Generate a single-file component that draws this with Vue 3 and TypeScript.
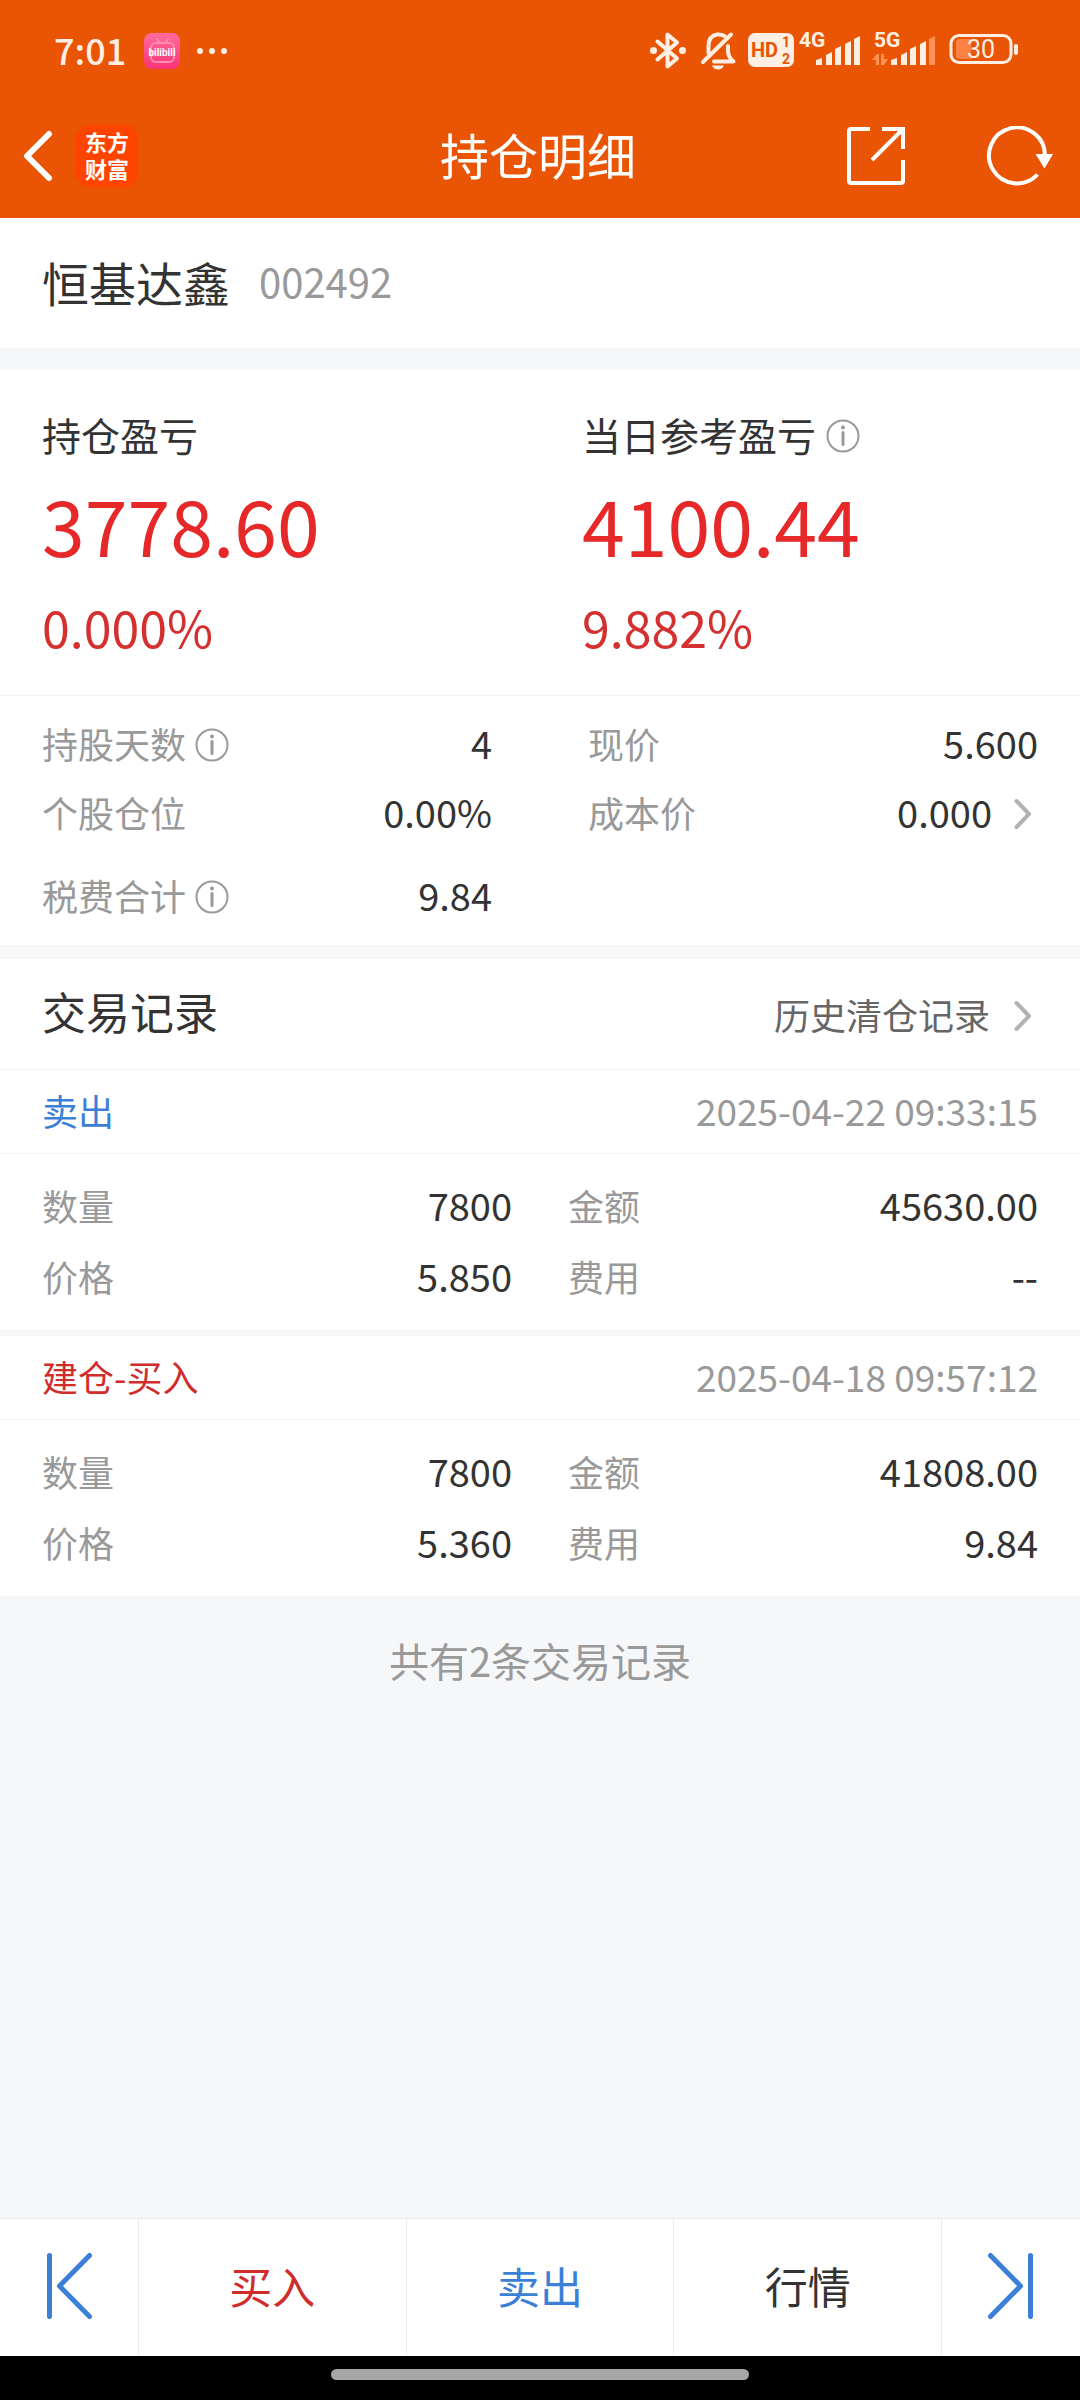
<script setup lang="ts">
import { ref } from 'vue'

interface Metric {
  label: string
  value: string
  info?: boolean
  link?: boolean
  spaced?: boolean
}

interface TradeRecord {
  type: string
  side: 'buy' | 'sell'
  time: string
  left: Metric[]
  right: Metric[]
}

const summary = ref([
  { label: '持仓盈亏', amount: '3778.60', percent: '0.000%', info: false },
  { label: '当日参考盈亏', amount: '4100.44', percent: '9.882%', info: true },
])

const leftMetrics = ref<Metric[]>([
  { label: '持股天数', value: '4', info: true },
  { label: '个股仓位', value: '0.00%' },
  { label: '税费合计', value: '9.84', info: true, spaced: true },
])

const rightMetrics = ref<Metric[]>([
  { label: '现价', value: '5.600' },
  { label: '成本价', value: '0.000', link: true },
])

const records = ref<TradeRecord[]>([
  {
    type: '卖出',
    side: 'sell',
    time: '2025-04-22 09:33:15',
    left: [
      { label: '数量', value: '7800' },
      { label: '价格', value: '5.850' },
    ],
    right: [
      { label: '金额', value: '45630.00' },
      { label: '费用', value: '--' },
    ],
  },
  {
    type: '建仓-买入',
    side: 'buy',
    time: '2025-04-18 09:57:12',
    left: [
      { label: '数量', value: '7800' },
      { label: '价格', value: '5.360' },
    ],
    right: [
      { label: '金额', value: '41808.00' },
      { label: '费用', value: '9.84' },
    ],
  },
])
</script>

<template>
  <div class="page">
    <header class="top">
      <div class="status">
        <div class="status-left">
          <span class="clock">7:01</span>
          <svg width="36" height="36" viewBox="0 0 36 36" aria-hidden="true">
            <defs>
              <linearGradient id="pink" x1="0" y1="0" x2="0" y2="1">
                <stop offset="0" stop-color="#ff6c9b" />
                <stop offset="1" stop-color="#fb3277" />
              </linearGradient>
            </defs>
            <rect width="36" height="36" rx="8" fill="url(#pink)" />
            <g fill="none" stroke="#ff8fb2" stroke-width="2" stroke-linecap="round">
              <rect x="7" y="10" width="23" height="19" rx="5" />
              <path d="M13 6l3 4M24 6l-3 4" />
            </g>
            <text class="glyphs" x="18" y="23" text-anchor="middle" font-size="10" font-weight="700" fill="#fff">bilibili</text>
          </svg>
          <svg width="32" height="8" viewBox="0 0 32 8" fill="#ffeee2" aria-hidden="true">
            <circle cx="4" cy="4" r="3" /><circle cx="16" cy="4" r="3" /><circle cx="28" cy="4" r="3" />
          </svg>
        </div>
        <svg class="glyphs" width="370" height="56" viewBox="0 -8 370 56" aria-hidden="true">
          <g fill="none" stroke="#ffeee2" stroke-width="4" stroke-linejoin="round" stroke-linecap="round">
            <path d="M7.500 10.500L27 27.500L17.500 35.500V3.500L27 11.500L7.500 28.500" />
          </g>
          <circle cx="3.500" cy="19.500" r="3.500" fill="#ffeee2" />
          <circle cx="32.500" cy="19.500" r="3.500" fill="#ffeee2" />
          <g fill="none" stroke="#ffeee2" stroke-width="4" stroke-linejoin="round" stroke-linecap="round">
            <path d="M53 31L81 3.500" />
            <path d="M58.500 22V15Q58.500 5 67 3.500Q71 3 74.500 5" />
            <path d="M64 30.500H83.500Q78 26 78 20V15" />
          </g>
          <path d="M62 34.500H74Q72.500 38.500 68 38.500Q63.500 38.500 62 34.500Z" fill="#ffeee2" />
          <rect x="98" y="2" width="46" height="34" rx="7" fill="#ffeee2" />
          <g font-weight="700" fill="#e95504">
            <text x="101" y="26" font-size="20">HD</text>
            <text x="132" y="16" font-size="14">1</text>
            <text x="132" y="33" font-size="14">2</text>
          </g>
          <g font-weight="700" font-size="21" fill="#ffeee2">
            <text x="149" y="16">4G</text>
            <text x="224" y="16">5G</text>
          </g>
          <g fill="#ffeee2">
            <path d="M166 34V29L172 27V34ZM176 34V24L182 21V34ZM185 34V18L191 15V34ZM195 34V13L201 10V34ZM204 34V8L210 5V34Z" />
            <path d="M241 34V29L247 27V34ZM251 34V24L257 21V34ZM260 34V18L266 15V34ZM270 34V13L276 10V34Z" />
          </g>
          <g fill="#ff9257">
            <path d="M279 34V8L285 5V34Z" />
            <path d="M222 29L227 23H229V34H226V29ZM231 34V23H234V28H238L234 34Z" />
          </g>
          <rect x="301" y="4.500" width="60" height="27" rx="8" fill="none" stroke="#ffeee2" stroke-width="3" />
          <path d="M309 8H321V28H309Q306 28 306 25V11Q306 8 309 8Z" fill="#fc8142" />
          <rect x="364" y="13" width="4" height="11" rx="2" fill="#ffeee2" />
          <text x="331" y="27" text-anchor="middle" font-size="25" fill="#ffeee2">30</text>
        </svg>
      </div>
      <nav class="nav">
        <div class="nav-side">
          <button class="icon-button" aria-label="返回">
            <svg width="32" height="52" viewBox="0 0 32 52" fill="none" stroke="#fff" stroke-width="6" stroke-linecap="round" stroke-linejoin="round">
              <path d="M27 4L5 26L27 48" />
            </svg>
          </button>
          <div class="brand"><span>东方财富</span></div>
        </div>
        <h1 class="title">持仓明细</h1>
        <div class="nav-side nav-actions">
          <button class="icon-button" aria-label="分享">
            <svg width="60" height="60" viewBox="0 0 60 60" fill="none" stroke="#fff" stroke-width="4" stroke-linejoin="round">
              <path d="M24 3H5Q3 3 3 5V55Q3 57 5 57H55Q57 57 57 55V34" />
              <path d="M36 3H57V23M57 3L26 34" stroke-linejoin="miter" />
            </svg>
          </button>
          <button class="icon-button" aria-label="刷新">
            <svg width="68" height="60" viewBox="0 0 68 60" fill="none" stroke="#fff" stroke-width="4">
              <path d="M51.500 48.500A28 28 0 1 1 59 30" />
              <path d="M49.500 28H67L58.500 42.500Z" fill="#fff" stroke="none" />
            </svg>
          </button>
        </div>
      </nav>
    </header>

    <main class="content">
      <section class="stock">
        <h2 class="stock-name">恒基达鑫</h2>
        <span class="stock-code">002492</span>
      </section>

      <section class="panel">
        <div class="summary">
          <div v-for="item in summary" :key="item.label" class="summary-item">
            <div class="summary-label">
              <span>{{ item.label }}</span>
              <button v-if="item.info" class="icon-button" :aria-label="item.label + '说明'">
                <svg width="34" height="34" viewBox="0 0 34 34" fill="none" stroke="#999" stroke-width="2">
                  <circle cx="17" cy="17" r="15.500" />
                  <path d="M17 13.500V25.500" stroke-width="3" stroke-linecap="round" />
                  <circle cx="17" cy="8.500" r="2" fill="#999" stroke="none" />
                </svg>
              </button>
            </div>
            <div class="summary-amount">{{ item.amount }}</div>
            <div class="summary-percent">{{ item.percent }}</div>
          </div>
        </div>
        <div class="metrics">
          <dl v-for="(column, index) in [leftMetrics, rightMetrics]" :key="index" class="metric-column">
            <div v-for="m in column" :key="m.label" class="row" :class="{ spaced: m.spaced }">
              <dt>
                <span>{{ m.label }}</span>
                <button v-if="m.info" class="icon-button" :aria-label="m.label + '说明'">
                  <svg width="34" height="34" viewBox="0 0 34 34" fill="none" stroke="#999" stroke-width="2">
                    <circle cx="17" cy="17" r="15.500" />
                    <path d="M17 13.500V25.500" stroke-width="3" stroke-linecap="round" />
                    <circle cx="17" cy="8.500" r="2" fill="#999" stroke="none" />
                  </svg>
                </button>
              </dt>
              <dd>
                <span>{{ m.value }}</span>
                <svg v-if="m.link" class="chevron" width="18" height="32" viewBox="0 0 18 32" aria-hidden="true">
                  <path d="M2.500 3L15 16L2.500 29" />
                </svg>
              </dd>
            </div>
          </dl>
        </div>
      </section>

      <section class="trades">
        <div class="trades-head">
          <h2>交易记录</h2>
          <a href="#history">
            <span>历史清仓记录</span>
            <svg class="chevron" width="18" height="32" viewBox="0 0 18 32" aria-hidden="true">
              <path d="M2.500 3L15 16L2.500 29" />
            </svg>
          </a>
        </div>
        <article v-for="record in records" :key="record.time" class="record">
          <header class="record-head">
            <h3 :class="record.side">{{ record.type }}</h3>
            <time>{{ record.time }}</time>
          </header>
          <div class="record-body">
            <dl v-for="(column, index) in [record.left, record.right]" :key="index" class="record-column">
              <div v-for="m in column" :key="m.label" class="row">
                <dt><span>{{ m.label }}</span></dt>
                <dd><span>{{ m.value }}</span></dd>
              </div>
            </dl>
          </div>
        </article>
      </section>
      <p class="total">共有2条交易记录</p>
    </main>

    <footer class="bottom">
      <div class="tabs">
        <button class="tab-side" aria-label="上一只">
          <svg width="48" height="68" viewBox="0 0 48 68" fill="none" stroke="#3b7fd6" stroke-width="5" stroke-linecap="round" stroke-linejoin="round">
            <path d="M4.500 3.500V64.500M44.500 3.500L14.500 34L44.500 64.500" />
          </svg>
        </button>
        <button class="tab buy">买入</button>
        <button class="tab sell">卖出</button>
        <button class="tab">行情</button>
        <button class="tab-side" aria-label="下一只">
          <svg width="48" height="68" viewBox="0 0 48 68" fill="none" stroke="#3b7fd6" stroke-width="5" stroke-linecap="round" stroke-linejoin="round">
            <path d="M43.500 3.500V64.500M3.500 3.500L33.500 34L3.500 64.500" />
          </svg>
        </button>
      </div>
      <div class="gesture"><span class="pill"></span></div>
    </footer>
  </div>
</template>

<style>
body {
  margin: 0;
  background: #f6f7f9;
}
</style>

<style scoped>
.page {
  display: flex;
  flex-direction: column;
  min-height: 100vh;
  background: #f6f7f9;
  color: #333;
  font-family: "Noto Sans CJK SC", "Noto Sans", sans-serif;
}

h1, h2, h3, p, dl, dd {
  margin: 0;
  font-weight: 400;
}

button {
  padding: 0;
  border: 0;
  background: none;
  color: inherit;
  font-family: inherit;
}

svg {
  display: block;
}

.glyphs {
  font-family: Roboto, "Liberation Sans", sans-serif;
}

.icon-button {
  display: flex;
}

.top {
  background: #e95504;
  color: #fff;
}

.status {
  display: flex;
  align-items: center;
  justify-content: space-between;
  height: 86px;
  padding: 8px 60px 0 54px;
}

.status-left {
  display: flex;
  align-items: center;
  gap: 16px;
}

.clock {
  padding-bottom: 4px;
  margin-right: 2px;
  color: #ffeee2;
  font-size: 36px;
  font-weight: 500;
  line-height: 36px;
}

.nav {
  display: grid;
  grid-template-columns: 1fr auto 1fr;
  align-items: center;
  height: 124px;
  padding: 0 26px 0 22px;
}

.nav-side {
  display: flex;
  align-items: center;
  gap: 22px;
}

.nav-actions {
  justify-content: flex-end;
  gap: 80px;
}

.brand {
  display: flex;
  align-items: center;
  justify-content: center;
  width: 62px;
  height: 62px;
  border-radius: 14px;
  background: #ff4400;
  font-size: 22px;
  font-weight: 700;
  line-height: 27px;
}

.brand span {
  width: 2em;
  padding-bottom: 2px;
}

.title {
  padding-bottom: 4px;
  font-size: 49px;
  line-height: 60px;
}

.stock {
  display: flex;
  align-items: center;
  gap: 29px;
  height: 126px;
  padding: 0 42px 4px;
  background: #fff;
}

.stock-name {
  font-size: 47px;
}

.stock-code {
  color: #999;
  font-size: 40px;
}

.panel {
  margin-top: 22px;
  background: #fff;
}

.summary {
  display: grid;
  grid-template-columns: 1fr 1fr;
  padding: 44px 0 39px;
  border-bottom: 1px solid #f4f4f6;
}

.summary-item {
  padding: 0 42px;
}

.summary-label {
  display: flex;
  align-items: center;
  gap: 10px;
  height: 44px;
  font-size: 39px;
}

.summary-label span,
dt span,
dd span,
.trades-head a span {
  padding-bottom: 4px;
}

.summary-amount {
  margin-top: 26px;
  color: #e72828;
  font-size: 77px;
  line-height: 80px;
}

.summary-percent {
  margin-top: 32px;
  color: #d53030;
  font-size: 50px;
  line-height: 60px;
}

.metrics {
  display: grid;
  grid-template-columns: 1fr 1fr;
  gap: 96px;
  padding: 14px 42px;
}

.row {
  display: flex;
  align-items: center;
  justify-content: space-between;
  height: 69px;
}

.spaced {
  margin-top: 14px;
}

dt {
  display: flex;
  align-items: center;
  gap: 9px;
  color: #999;
  font-size: 36px;
}

dd {
  display: flex;
  align-items: center;
  gap: 22px;
  font-size: 38px;
}

.chevron {
  margin-right: 6px;
  fill: none;
  stroke: #b2b2b2;
  stroke-width: 4;
  stroke-linecap: round;
  stroke-linejoin: round;
}

.trades {
  margin-top: 14px;
}

.trades-head {
  display: flex;
  align-items: center;
  justify-content: space-between;
  height: 110px;
  padding: 0 42px;
  border-bottom: 1px solid #f4f4f6;
  background: #fff;
}

.trades-head h2 {
  padding-bottom: 6px;
  font-size: 44px;
}

.trades-head a {
  display: flex;
  align-items: center;
  gap: 24px;
  padding-top: 4px;
  color: #666;
  font-size: 36px;
  text-decoration: none;
}

.record {
  background: #fff;
}

.record + .record {
  margin-top: 6px;
}

.record-head {
  display: flex;
  align-items: center;
  justify-content: space-between;
  height: 79px;
  padding: 0 42px 4px;
  border-bottom: 1px solid #f4f4f6;
}

.record-head h3 {
  font-size: 36px;
}

.record-head time {
  color: #999;
  font-size: 37px;
}

.buy,
.record-head .buy {
  color: #d12c2c;
}

.sell,
.record-head .sell {
  color: #3b7fd6;
}

.record-body {
  display: grid;
  grid-template-columns: 1fr 1fr;
  gap: 56px;
  padding: 17px 42px;
}

.record-column .row {
  height: 71px;
}

.total {
  padding: 37px 0;
  color: #999;
  font-size: 40px;
  line-height: 54px;
  text-align: center;
}

.bottom {
  margin-top: auto;
}

.tabs {
  display: flex;
  height: 137px;
  border-top: 1px solid #ececec;
  background: #fff;
}

.tab-side {
  display: flex;
  flex: 138 1 0;
  align-items: center;
  justify-content: center;
  padding-bottom: 4px;
}

.tab {
  flex: 267 1 0;
  padding-bottom: 6px;
  border-left: 1px solid #ececec;
  font-size: 43px;
}

.tab + .tab-side {
  border-left: 1px solid #ececec;
}

.gesture {
  display: flex;
  align-items: center;
  justify-content: center;
  height: 44px;
  background: #000;
}

.pill {
  width: 418px;
  height: 11px;
  margin-bottom: 7px;
  border-radius: 6px;
  background: #a6a6a6;
}
</style>
